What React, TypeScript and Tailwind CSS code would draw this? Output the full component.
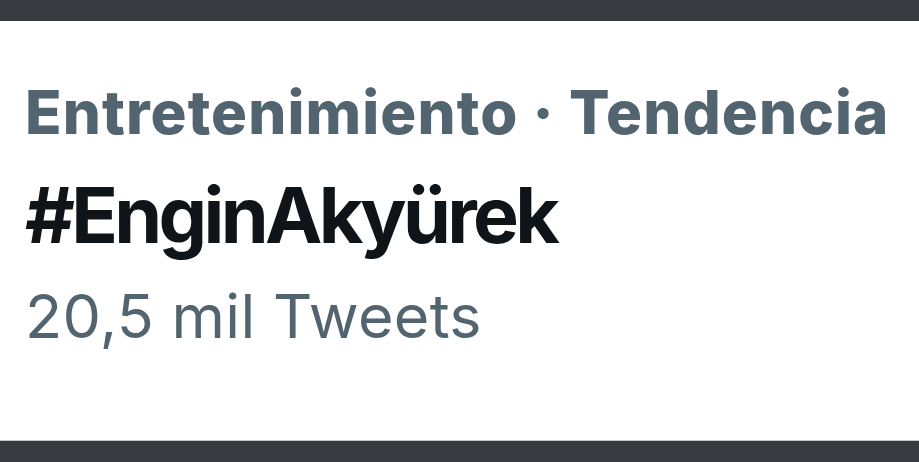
export default function App() {
  return (
    <div className="flex h-[462px] w-[919px] flex-col bg-white" style={{ fontFamily: "Inter, 'Noto Sans', sans-serif" }}>
      <div className="h-[21px] bg-[#373b40]" />
      <div className="flex flex-1 flex-col pl-[25px] pt-[41px]">
        <div className="text-[60px] leading-[101px] font-extrabold tracking-[1.1px] text-[#536471] whitespace-nowrap">Entretenimiento · Tendencia</div>
        <div className="text-[77px] leading-[104px] font-bold tracking-[-3.7px] text-[#0f1419] whitespace-nowrap">#EnginAkyürek</div>
        <div className="text-[61px] leading-[98px] tracking-[0.3px] text-[#536471] whitespace-nowrap">20,5 mil Tweets</div>
      </div>
      <div className="h-px bg-[#c8c8c8]" />
      <div className="h-[21px] bg-[#373b40]" />
    </div>
  );
}
